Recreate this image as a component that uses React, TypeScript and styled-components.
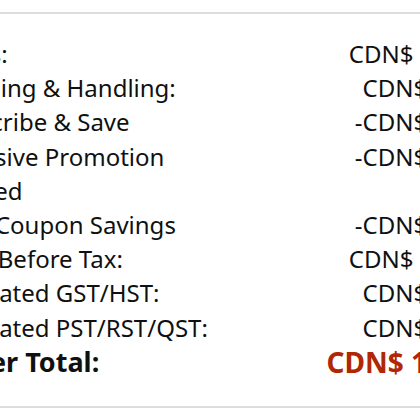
import React from "react";
import styled, { createGlobalStyle } from "styled-components";

const GlobalStyle = createGlobalStyle`
    html, body {
        margin: 0;
        padding: 0;
        background: #ffffff;
        overflow: hidden;
    }
    body {
        font-family: "Noto Sans", "Open Sans", sans-serif;
        color: #0f1111;
    }
`

const Page = styled.div`
    width: 420px;
    height: 420px;
    overflow: hidden;
    padding-top: 12px;
    box-sizing: border-box;
`

const Card = styled.section`
    width: 596px;
    margin-left: -89px;
    box-sizing: border-box;
    border: 2px solid #dcdcdc;
    border-radius: 8px;
    padding: 23px 24px 27px;
`

const Grid = styled.div`
    display: grid;
    grid-template-columns: 310px 1fr;
`

const Label = styled.div<{ $total?: boolean }>`
    font-size: ${p => (p.$total ? "27px" : "24px")};
    font-weight: ${p => (p.$total ? 700 : 400)};
    line-height: 34.2px;
    margin-left: ${p => (p.$total ? "3px" : "0")};
`

const Value = styled.div<{ $total?: boolean }>`
    font-size: ${p => (p.$total ? "28px" : "24px")};
    font-weight: ${p => (p.$total ? 700 : 400)};
    line-height: 34.2px;
    text-align: right;
    white-space: nowrap;
    margin-right: ${p => (p.$total ? "-2px" : "0")};
    color: ${p => (p.$total ? "#b12704" : "#0f1111")};
`

const rows = [
    { label: "Items:", value: "CDN$ 21.97" },
    { label: "Shipping & Handling:", value: "CDN$ 0.00" },
    { label: "Subscribe & Save", value: "-CDN$ 1.10" },
    { label: "Exclusive Promotion Applied", value: "-CDN$ 2.00" },
    { label: "Your Coupon Savings", value: "-CDN$ 3.00" },
    { label: "Total Before Tax:", value: "CDN$ 15.87" },
    { label: "Estimated GST/HST:", value: "CDN$ 0.79" },
    { label: "Estimated PST/RST/QST:", value: "CDN$ 1.11" },
]

export default function App() {
    return (
        <Page>
            <GlobalStyle />
            <Card>
                <Grid>
                    {rows.map(r => (
                        <React.Fragment key={r.label}>
                            <Label>{r.label}</Label>
                            <Value>{r.value}</Value>
                        </React.Fragment>
                    ))}
                    <Label $total>Order Total:</Label>
                    <Value $total>CDN$ 17.77</Value>
                </Grid>
            </Card>
        </Page>
    )
}
